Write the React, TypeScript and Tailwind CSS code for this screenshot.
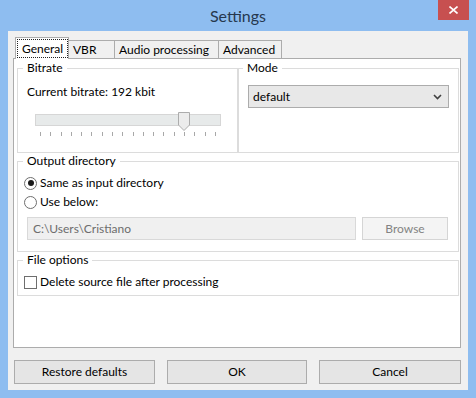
import React from "react";

const font = { fontFamily: 'Lato, "Noto Sans", sans-serif' };

function Tab({ label, selected, w }: { label: string; selected?: boolean; w: string }) {
  if (selected) {
    return (
      <div className={`${w} h-[22px] -mb-px bg-white border border-b-0 border-[#acacac] flex items-start pt-[1px] pl-[1px]`}>
        <div className="border border-dotted border-[#222] h-[19px] px-[4px] leading-[17px] text-[12px] text-black">
          {label}
        </div>
      </div>
    );
  }
  return (
    <div className={`${w} h-[18px] bg-[#f0f0f0] border border-b-0 border-l-0 border-[#acacac] leading-[18px] text-[12px] text-black pl-[4px]`}>
      {label}
    </div>
  );
}

function Legend({ children, ml = "ml-[5px]" }: { children: React.ReactNode; ml?: string }) {
  return <legend className={`${ml} px-[4px] text-[12px] leading-[16px] text-black`}>{children}</legend>;
}

function Button({ label, w, disabled }: { label: string; w: string; disabled?: boolean }) {
  return (
    <div
      className={`${w} h-full flex items-center justify-center text-[12px] border ${
        disabled
          ? "border-[#d5d5d5] bg-[#f4f4f4] text-[#838383]"
          : "border-[#acacac] bg-[#e5e5e5] text-black"
      }`}
    >
      {label}
    </div>
  );
}

export default function App() {
  const ticks = Array.from({ length: 18 });
  return (
    <div className="w-[476px] h-[398px] bg-[#8ebdf0] flex flex-col" style={font}>
      {/* title bar */}
      <div className="h-[31px] relative flex items-center justify-center">
        <span className="text-[16px] text-[#26384e] leading-none pt-[1px]">Settings</span>
        <div className="absolute top-0 left-[438px] w-[31px] h-[20px] bg-[#c75050] flex items-center justify-center">
          <svg width="9" height="8" viewBox="0 0 9 8">
            <path d="M0.5 0.5 L8.5 7.5 M8.5 0.5 L0.5 7.5" stroke="white" strokeWidth="1.6" />
          </svg>
        </div>
      </div>

      {/* client */}
      <div className="mx-[8px] h-[359px] bg-[#f0f0f0] flex flex-col pl-[5px] pr-[7px] pt-[6px]">
        {/* tabs */}
        <div className="h-[21px] flex items-end pl-[2px] relative z-10">
          <Tab label="General" selected w="w-[54px]" />
          <Tab label="VBR" w="w-[46px]" />
          <Tab label="Audio processing" w="w-[104px]" />
          <Tab label="Advanced" w="w-[63px]" />
        </div>

        {/* panel */}
        <div className="h-[290px] bg-white border border-[#acacac] pl-[3px] pt-[1px] flex flex-col">
          <div className="flex">
            <fieldset className="w-[221px] h-[93px] border border-[#dcdcdc]">
              <Legend>Bitrate</Legend>
              <div className="mt-[8px] ml-[9px] text-[12px] leading-[16px] text-black">Current bitrate: 192 kbit</div>
              <div className="ml-[17px] mt-[14px] w-[186px] relative">
                <div className="h-[12px] bg-[#e7eaea] border border-[#d6d6d6]" />
                <svg className="absolute left-[143px] top-[-2px]" width="12" height="19" viewBox="0 0 12 19">
                  <path d="M0.5 0.5 H11.5 V13 L6 18.5 L0.5 13 Z" fill="#ececec" stroke="#acacac" />
                </svg>
                <div className="flex justify-between px-[5px] mt-[6px]">
                  {ticks.map((_, i) => (
                    <div key={i} className="w-px h-[4px] bg-[#a8a8a8]" />
                  ))}
                </div>
              </div>
            </fieldset>
            <fieldset className="w-[221px] h-[93px] border border-[#dcdcdc]">
              <Legend ml="ml-[4px]">Mode</Legend>
              <div className="mt-[9px] ml-[9px] w-[201px] h-[23px] border border-[#acacac] bg-[#e8e8e8] flex items-center justify-between pl-[4px] pr-[6px]">
                <span className="text-[12px] text-black">default</span>
                <svg width="9" height="6" viewBox="0 0 9 6">
                  <path d="M1 1 L4.5 4.5 L8 1" fill="none" stroke="#404040" strokeWidth="1.6" />
                </svg>
              </div>
            </fieldset>
          </div>

          <fieldset className="w-[442px] h-[99px] border border-[#dcdcdc]">
            <Legend>Output directory</Legend>
            <div className="mt-[6px] ml-[6px] flex items-center h-[16px] gap-[3px] text-[12px] text-black">
              <div className="w-[13px] h-[13px] rounded-full border border-[#6e6e6e] bg-white flex items-center justify-center">
                <div className="w-[6px] h-[6px] rounded-full bg-[#1a1a1a]" />
              </div>
              <span>Same as input directory</span>
            </div>
            <div className="mt-[3px] ml-[6px] flex items-center h-[16px] gap-[3px] text-[12px] text-black">
              <div className="w-[13px] h-[13px] rounded-full border border-[#6e6e6e] bg-white" />
              <span>Use below:</span>
            </div>
            <div className="mt-[7px] ml-[9px] flex h-[23px] gap-[6px]">
              <div className="w-[329px] h-full border border-[#d9d9d9] bg-[#f0f0f0] text-[12px] text-[#6d6d6d] flex items-center pl-[5px]">
                C:\Users\Cristiano
              </div>
              <Button label="Browse" w="w-[86px]" disabled />
            </div>
          </fieldset>

          <fieldset className="w-[442px] h-[44px] border border-[#dcdcdc]">
            <Legend>File options</Legend>
            <div className="mt-[6px] ml-[6px] flex items-center h-[16px] gap-[3px] text-[12px] text-black">
              <div className="w-[13px] h-[13px] border border-[#6e6e6e] bg-white" />
              <span>Delete source file after processing</span>
            </div>
          </fieldset>
        </div>

        {/* buttons */}
        <div className="mt-[12px] ml-[1px] h-[24px] flex gap-[12px]">
          <Button label="Restore defaults" w="w-[142px]" />
          <Button label="OK" w="w-[141px]" />
          <Button label="Cancel" w="w-[143px]" />
        </div>
      </div>
    </div>
  );
}
